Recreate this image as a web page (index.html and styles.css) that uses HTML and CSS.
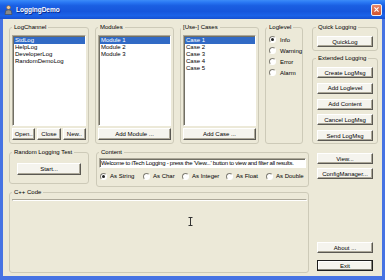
FILE: index.html
```html
<!DOCTYPE html>
<html lang="en">
<head>
    <meta charset="UTF-8">
    <meta name="viewport" content="width=device-width, initial-scale=1.0">
    <title>LoggingDemo</title>
    <link rel="stylesheet" href="styles.css">
</head>
<body>
    <div class="window">
        <div class="titlebar">
            <svg class="app-icon" width="9" height="10" viewBox="0 0 9 10">
                <circle cx="4.5" cy="2.5" r="2" fill="#e8c9a0" stroke="#7a5a3a" stroke-width="0.6"/>
                <path d="M1 9.5 L1.8 5.5 Q4.5 4.2 7.2 5.5 L8 9.5 Z" fill="#8a8a8a" stroke="#4a4a4a" stroke-width="0.6"/>
            </svg>
            <span class="title">LoggingDemo</span>
            <span class="close">
                <svg width="11" height="11" viewBox="0 0 11 11">
                    <path d="M3 3 L8 8 M8 3 L3 8" stroke="#fff" stroke-width="1.4"/>
                </svg>
            </span>
        </div>

        <div class="client">
            <div class="main">
                <div class="top-row">
                    <fieldset class="group channel">
                        <legend>LogChannel</legend>
                        <div class="listbox">
                            <div class="item selected">StdLog</div>
                            <div class="item">HelpLog</div>
                            <div class="item">DeveloperLog</div>
                            <div class="item">RandomDemoLog</div>
                        </div>
                        <div class="btn-row">
                            <button>Open..</button>
                            <button>Close</button>
                            <button>New..</button>
                        </div>
                    </fieldset>

                    <fieldset class="group modules">
                        <legend>Modules</legend>
                        <div class="listbox">
                            <div class="item selected">Module 1</div>
                            <div class="item">Module 2</div>
                            <div class="item">Module 3</div>
                        </div>
                        <div class="btn-row">
                            <button>Add Module ...</button>
                        </div>
                    </fieldset>

                    <fieldset class="group cases">
                        <legend>[Use-] Cases</legend>
                        <div class="listbox">
                            <div class="item selected">Case 1</div>
                            <div class="item">Case 2</div>
                            <div class="item">Case 3</div>
                            <div class="item">Case 4</div>
                            <div class="item">Case 5</div>
                        </div>
                        <div class="btn-row">
                            <button>Add Case ...</button>
                        </div>
                    </fieldset>

                    <fieldset class="group loglevel">
                        <legend>Loglevel</legend>
                        <label class="radio-item"><span class="radio checked"></span>Info</label>
                        <label class="radio-item"><span class="radio"></span>Warning</label>
                        <label class="radio-item"><span class="radio"></span>Error</label>
                        <label class="radio-item"><span class="radio"></span>Alarm</label>
                    </fieldset>
                </div>

                <div class="mid-row">
                    <fieldset class="group random">
                        <legend>Random Logging Test</legend>
                        <button class="start-btn">Start...</button>
                    </fieldset>

                    <fieldset class="group content">
                        <legend>Content</legend>
                        <input class="content-input" type="text" value="Welcome to iTech Logging - press the 'View...' button to view and filter all results.">
                        <div class="radio-row">
                            <label class="radio-item w-string"><span class="radio checked"></span>As String</label>
                            <label class="radio-item w-char"><span class="radio"></span>As Char</label>
                            <label class="radio-item w-int"><span class="radio"></span>As Integer</label>
                            <label class="radio-item w-float"><span class="radio"></span>As Float</label>
                            <label class="radio-item"><span class="radio"></span>As Double</label>
                        </div>
                    </fieldset>
                </div>

                <fieldset class="group code">
                    <legend>C++ Code</legend>
                    <div class="code-area">
                        <svg class="ibeam" width="5" height="9" viewBox="0 0 5 9">
                            <path d="M0.5 0.5 H4.5 M2.5 0.5 V8.5 M0.5 8.5 H4.5" stroke="#333" stroke-width="1" fill="none"/>
                        </svg>
                    </div>
                </fieldset>
            </div>

            <div class="side">
                <fieldset class="group quick">
                    <legend>Quick Logging</legend>
                    <button class="side-btn">QuickLog</button>
                </fieldset>

                <fieldset class="group extended">
                    <legend>Extended Logging</legend>
                    <button class="side-btn">Create LogMsg</button>
                    <button class="side-btn">Add Loglevel</button>
                    <button class="side-btn">Add Content</button>
                    <button class="side-btn">Cancel LogMsg</button>
                    <button class="side-btn">Send LogMsg</button>
                </fieldset>

                <button class="side-btn view-btn">View...</button>
                <button class="side-btn config-btn">ConfigManager...</button>
                <button class="side-btn about-btn">About ...</button>
                <button class="side-btn exit-btn">Exit</button>
            </div>
        </div>
    </div>
</body>
</html>
```

FILE: styles.css
```css
* {
    box-sizing: border-box;
}
body {
    margin: 0;
    font-family: "Liberation Sans", Arial, sans-serif;
    font-size: 6px;
    color: #000;
    background: #fff;
}
.window {
    width: 385px;
    height: 280px;
    display: flex;
    flex-direction: column;
}
.titlebar {
    height: 19px;
    display: flex;
    align-items: center;
    padding: 0 3px 0 4px;
    background: linear-gradient(to bottom, #3c8cf8 0%, #2a78f4 12%, #1a5fe2 30%, #1656dc 60%, #1b62e8 82%, #1750d0 100%);
}
.app-icon {
    margin-right: 3px;
}
.title {
    color: #fff;
    font-weight: bold;
    font-size: 6.5px;
    flex: 1;
    text-shadow: 1px 1px 0 #0a2a8a;
}
.close {
    width: 11px;
    height: 12px;
    display: flex;
    align-items: center;
    justify-content: center;
    border: 1px solid #f0f0f0;
    border-radius: 2px;
    background: linear-gradient(#e8876a, #d2522c);
}
.client {
    flex: 1;
    display: flex;
    gap: 3px;
    padding: 5px 4px 3px 6px;
    background: #ece9d8;
    border: solid #4673e3;
    border-width: 0 3px 4px 3px;
}
.main {
    width: 300px;
    display: flex;
    flex-direction: column;
}
.top-row {
    display: flex;
    height: 120px;
}
.mid-row {
    display: flex;
    gap: 7px;
    margin-top: 5px;
    align-items: flex-start;
}

/* group boxes */
.group {
    margin: 0;
    padding: 4px 2px 3px;
    border: 1px solid #cdcab8;
    border-radius: 3px;
    min-width: 0;
    display: flex;
    flex-direction: column;
}
.group legend {
    padding: 0 2px;
    line-height: 7px;
    height: 7px;
}
.channel {
    width: 80px;
}
.modules {
    width: 79px;
    margin-left: 6px;
}
.cases {
    width: 79px;
    margin-left: 6px;
}
.cases legend {
    margin-left: -2px;
}
.loglevel {
    width: 38px;
    margin-left: 6px;
    padding: 3px 0 0 3px;
}
.loglevel legend {
    margin-left: -2px;
}

/* list boxes */
.listbox {
    flex: 1;
    background: #fff;
    border: 1px solid;
    border-color: #aca899 #fff #fff #aca899;
    box-shadow: inset 1px 1px 0 #716f64;
    padding: 1px 0 0 1px;
    margin-bottom: 2px;
}
.item {
    line-height: 7px;
    height: 7px;
    padding-left: 1px;
    white-space: nowrap;
}
.item.selected {
    background: #316ac5;
    color: #fff;
}

/* buttons */
button {
    font-family: inherit;
    font-size: 6px;
    color: #000;
    padding: 0;
    margin: 0;
    height: 12px;
    background: #f5f4ee;
    border: 1px solid;
    border-color: #fff #5a5852 #5a5852 #fff;
    box-shadow: inset -1px -1px 0 #aca899;
    white-space: nowrap;
}
.btn-row {
    display: flex;
    gap: 2px;
}
.btn-row button {
    flex: 1;
}

/* radios */
.radio-item {
    display: flex;
    align-items: center;
    gap: 4px;
    height: 11px;
    white-space: nowrap;
}
.radio {
    width: 7px;
    height: 7px;
    border-radius: 50%;
    background: #fff;
    border: 1px solid;
    border-color: #807e74 #fff #fff #807e74;
    display: flex;
    align-items: center;
    justify-content: center;
    flex-shrink: 0;
}
.radio.checked::after {
    content: "";
    width: 3px;
    height: 3px;
    border-radius: 50%;
    background: #222;
}

/* middle row */
.random {
    width: 80px;
    height: 35px;
    padding: 7px 0 0 7px;
}
.random legend {
    margin-left: -5px;
}
.start-btn {
    width: 64px;
}
.content {
    width: 213px;
    height: 38px;
    padding: 2px 2px 3px;
}
.content-input {
    height: 10px;
    width: 100%;
    font-family: inherit;
    font-size: 6px;
    letter-spacing: -0.25px;
    padding: 0 1px;
    background: #fff;
    border: 1px solid;
    border-color: #aca899 #fff #fff #aca899;
    box-shadow: inset 1px 1px 0 #716f64;
    outline: none;
}
.radio-row {
    display: flex;
    margin-top: 3px;
    padding-left: 1px;
}
.radio-row .radio-item {
    height: 10px;
    gap: 3px;
}
.w-string { width: 43px; }
.w-char { width: 39px; }
.w-int { width: 44px; }
.w-float { width: 40px; }

/* code area */
.code {
    margin-top: 2px;
    height: 84px;
    padding: 3px 1px 2px 2px;
}
.code-area {
    flex: 1;
    position: relative;
    background: #fff;
    border: 1px solid;
    border-color: #aca899 #fff #fff #aca899;
    box-shadow: inset 1px 1px 0 #716f64;
}
.ibeam {
    position: absolute;
    left: 175px;
    top: 17px;
}

/* right column */
.side {
    width: 66px;
    display: flex;
    flex-direction: column;
}
.side-btn {
    width: 56px;
    height: 11px;
    align-self: center;
}
.quick {
    height: 27px;
    padding: 5px 0 0;
}
.quick legend,
.extended legend {
    margin-left: 3px;
}
.extended {
    margin-top: 4px;
    height: 89px;
    padding: 5px 0 0;
    gap: 4.75px;
}
.view-btn {
    margin-top: 9px;
}
.config-btn {
    margin-top: 4px;
}
.about-btn {
    margin-top: auto;
}
.exit-btn {
    margin-top: 7px;
    margin-bottom: 2px;
    border: 1px solid #1e1e1e;
    box-shadow: inset -1px -1px 0 #8a887c, inset 1px 1px 0 #fff;
}
```
